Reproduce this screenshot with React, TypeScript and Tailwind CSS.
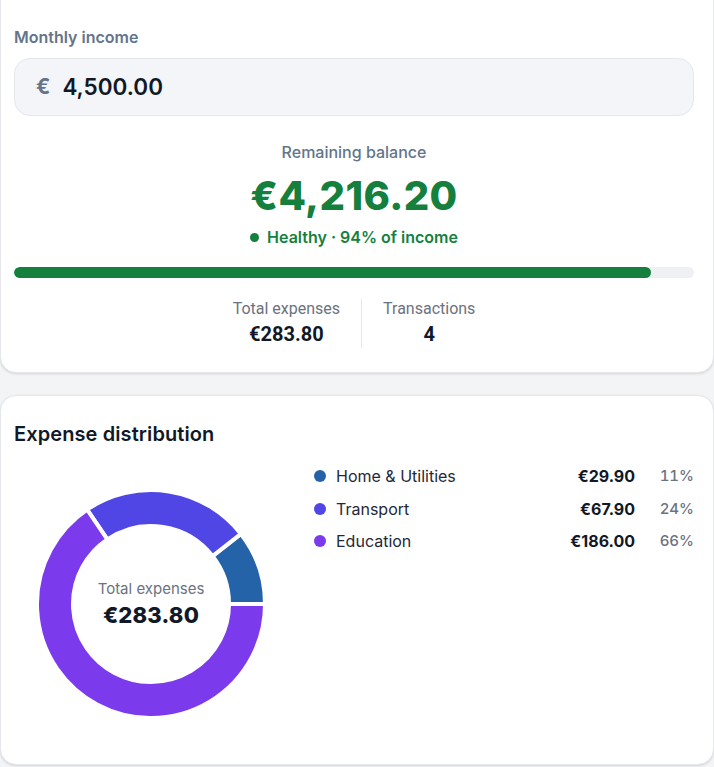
import React from "react";

type Slice = { label: string; amount: number; color: string };

const slices: Slice[] = [
  { label: "Home & Utilities", amount: 29.9, color: "#2563a8" },
  { label: "Transport", amount: 67.9, color: "#4f46e5" },
  { label: "Education", amount: 186.0, color: "#7c3aed" },
];

const income = 4500;
const total = slices.reduce((s, x) => s + x.amount, 0);
const remaining = income - total;

const eur = (n: number) =>
  "€" + n.toLocaleString("en-US", { minimumFractionDigits: 2, maximumFractionDigits: 2 });

// ring segment, angles in degrees counter-clockwise from 3 o'clock
function arcPath(cx: number, cy: number, r0: number, r1: number, a0: number, a1: number) {
  const p = (r: number, a: number) => {
    const t = (a * Math.PI) / 180;
    return `${(cx + r * Math.cos(t)).toFixed(2)} ${(cy - r * Math.sin(t)).toFixed(2)}`;
  };
  const large = a1 - a0 > 180 ? 1 : 0;
  return [
    `M ${p(r1, a0)}`,
    `A ${r1} ${r1} 0 ${large} 0 ${p(r1, a1)}`,
    `L ${p(r0, a1)}`,
    `A ${r0} ${r0} 0 ${large} 1 ${p(r0, a0)}`,
    "Z",
  ].join(" ");
}

function Donut() {
  let start = 0;
  const size = 232;
  const c = size / 2;
  return (
    <div className="relative h-[232px] w-[232px]">
      <svg width={size} height={size} viewBox={`0 0 ${size} ${size}`}>
        {slices.map((s) => {
          const sweep = (s.amount / total) * 360;
          const d = arcPath(c, c, 78, 114, start, start + sweep);
          start += sweep;
          return <path key={s.label} d={d} fill={s.color} stroke="#fff" strokeWidth={4} strokeLinejoin="round" />;
        })}
      </svg>
      <div className="absolute inset-0 flex flex-col items-center justify-center">
        <span className="text-[15px] leading-5 text-[#6b7280]">Total expenses</span>
        <span className="mt-[2px] text-[22px] font-extrabold leading-7 tracking-[0.2px] text-[#111827]">{eur(total)}</span>
      </div>
    </div>
  );
}

export default function App() {
  const pct = Math.round((remaining / income) * 100);

  return (
    <div className="min-h-screen overflow-hidden bg-[#f3f4f6] font-['Inter',sans-serif]">
      {/* Balance card */}
      <div className="-mt-5 rounded-2xl border border-[#e5e7eb] bg-white pb-[24px] pl-[13px] pr-[19px] pt-[44px] shadow-sm">
        <div className="text-[16px] font-semibold leading-6 text-[#64748b]">Monthly income</div>
        <div className="mt-[9px] flex h-[58px] items-center gap-[12px] rounded-2xl border border-[#e5e7eb] bg-[#f3f5f8] px-[21px]">
          <span className="text-[21px] font-bold text-[#64748b]">€</span>
          <span className="text-[22.5px] font-semibold text-[#111827]">4,500.00</span>
        </div>

        <div className="mt-[24px] flex flex-col items-center">
          <span className="text-[16px] font-medium leading-6 text-[#64748b]">Remaining balance</span>
          <span className="mt-[8px] text-[40px] font-extrabold leading-[48px] tracking-[0.4px] text-[#15803d]">
            {eur(remaining)}
          </span>
          <span className="mt-[5px] flex items-center gap-[8px] text-[16px] font-semibold leading-6 text-[#15803d]">
            <span className="h-[9px] w-[9px] rounded-full bg-[#15803d]" />
            Healthy · {pct}% of income
          </span>
        </div>

        <div className="mt-[18px] h-[11px] w-full overflow-hidden rounded-full bg-[#eef0f3]">
          <div className="h-full rounded-full bg-[#15803d]" style={{ width: `${(remaining / income) * 100}%` }} />
        </div>

        <div className="mt-[21px] flex justify-center font-['Roboto',sans-serif]">
          <div className="flex flex-col items-center pr-[21px]">
            <span className="text-[16px] leading-5 text-[#6b7280]">Total expenses</span>
            <span className="mt-[1px] text-[20px] font-bold leading-7 text-[#111827]">{eur(total)}</span>
          </div>
          <div className="w-px bg-[#e5e7eb]" />
          <div className="flex flex-col items-center pl-[21px]">
            <span className="text-[16px] leading-5 text-[#6b7280]">Transactions</span>
            <span className="mt-[1px] text-[20px] font-bold leading-7 text-[#111827]">4</span>
          </div>
        </div>
      </div>

      {/* Distribution card */}
      <div className="mt-[22px] rounded-2xl border border-[#e5e7eb] bg-white pb-[18px] pl-[13px] pr-[19px] pt-[24px] shadow-sm">
        <h2 className="text-[20px] font-semibold leading-7 tracking-[0.1px] text-[#111827]">Expense distribution</h2>
        <div className="mt-[12px] flex">
          <div className="flex h-[286px] w-[274px] items-center justify-center pt-[2px]">
            <Donut />
          </div>
          <div className="ml-[26px] flex flex-1 flex-col">
            {slices.map((s) => (
              <div key={s.label} className="flex h-[32.5px] items-center">
                <span className="h-[12px] w-[12px] rounded-full" style={{ background: s.color }} />
                <span className="ml-[10px] flex-1 text-[16px] leading-6 text-[#1f2937]">{s.label}</span>
                <span className="text-[16px] font-bold leading-6 text-[#111827]">{eur(s.amount)}</span>
                <span className="w-[59px] text-right text-[15px] font-medium leading-6 tabular-nums text-[#6b7280]">
                  {Math.round((s.amount / total) * 100)}%
                </span>
              </div>
            ))}
          </div>
        </div>
      </div>
    </div>
  );
}
